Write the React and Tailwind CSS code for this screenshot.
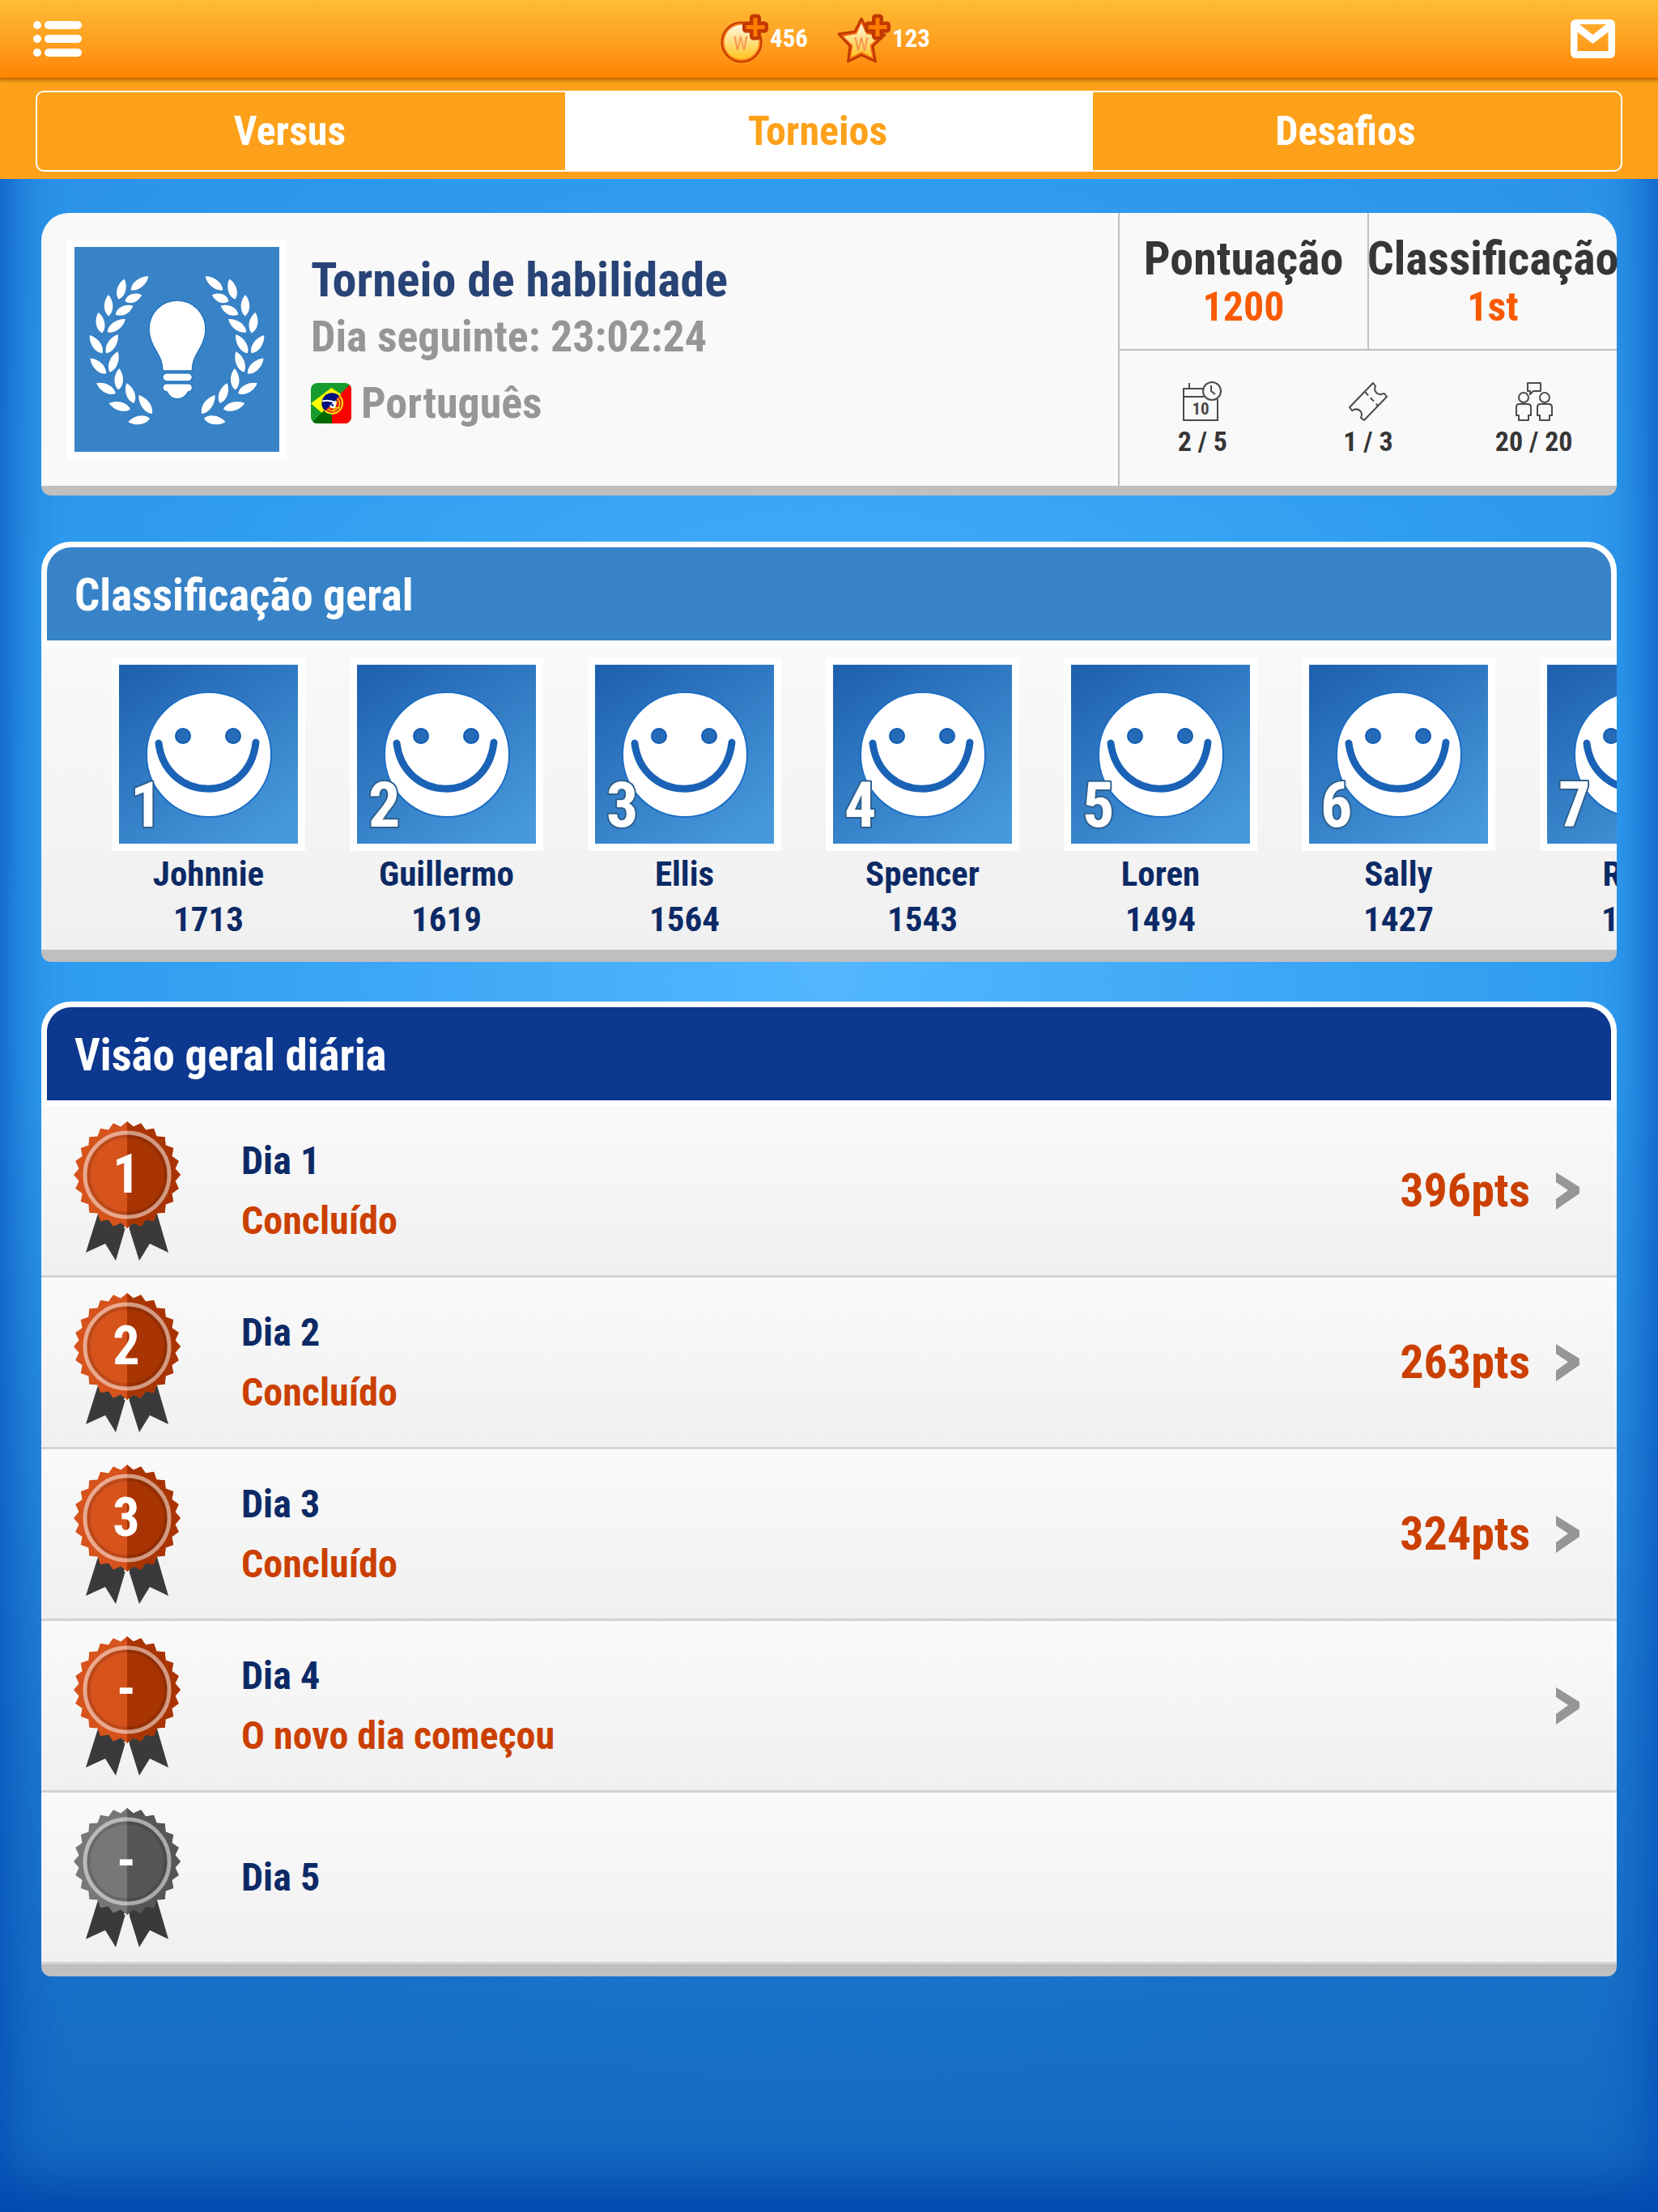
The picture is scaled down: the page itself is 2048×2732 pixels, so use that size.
const players = [
  { name: "Johnnie", score: 1713 },
  { name: "Guillermo", score: 1619 },
  { name: "Ellis", score: 1564 },
  { name: "Spencer", score: 1543 },
  { name: "Loren", score: 1494 },
  { name: "Sally", score: 1427 },
  { name: "Ross", score: 1392 },
];

const days = [
  { label: "Dia 1", status: "Concluído", points: "396pts", badge: "1", open: true },
  { label: "Dia 2", status: "Concluído", points: "263pts", badge: "2", open: true },
  { label: "Dia 3", status: "Concluído", points: "324pts", badge: "3", open: true },
  { label: "Dia 4", status: "O novo dia começou", points: "", badge: "-", open: true },
  { label: "Dia 5", status: "", points: "", badge: "-", open: false },
];

// [tipX, tipY, baseX, baseY] of every leaf in the left half of the wreath
const leaves = [
  [273, 108, 208, 159],
  [184, 118, 163, 193],
  [248, 177, 186, 200],
  [125, 176, 126, 255],
  [216, 217, 151, 249],
  [88, 241, 102, 318],
  [188, 266, 121, 314],
  [160, 322, 117, 392],
  [56, 325, 103, 392],
  [160, 385, 130, 462],
  [58, 410, 117, 467],
  [165, 448, 162, 527],
  [81, 502, 152, 540],
  [192, 502, 219, 576],
  [127, 576, 206, 598],
  [237, 546, 286, 615],
  [198, 645, 278, 632],
];

function leafPath([tx, ty, bx, by]) {
  const dx = bx - tx;
  const dy = by - ty;
  const len = Math.hypot(dx, dy);
  const nx = (-dy / len) * 24;
  const ny = (dx / len) * 24;
  const p = (t, s) => `${tx + dx * t + nx * s} ${ty + dy * t + ny * s}`;
  return `M${tx} ${ty}C${p(0.25, 0.75)} ${p(0.75, 1)} ${bx} ${by}C${p(0.75, -1)} ${p(0.25, -0.75)} ${tx} ${ty}Z`;
}

// 24-tooth rosette edge
const rosette = Array.from({ length: 48 }, (_, i) => {
  const r = i % 2 ? 60 : 66;
  const a = (i * Math.PI) / 24;
  return `${(66 + r * Math.sin(a)).toFixed(1)},${(66 - r * Math.cos(a)).toFixed(1)}`;
}).join(" ");

function ListIcon() {
  return (
    <svg className="w-[60px] h-[46px]" viewBox="0 0 60 46" fill="#fff">
      {[0, 17, 34].map((y) => (
        <g key={y}>
          <rect x="0" y={y + 1} width="10" height="10" rx="5" />
          <rect x="14" y={y + 1} width="46" height="10" rx="5" />
        </g>
      ))}
    </svg>
  );
}

function MailIcon() {
  return (
    <svg className="w-[55px] h-[48px]" viewBox="0 0 55 48">
      <path
        fill="#fff"
        fillRule="evenodd"
        d="M7 0H48Q55 0 55 7V41Q55 48 48 48H7Q0 48 0 41V7Q0 0 7 0ZM11 6L27.500 19L44 6ZM8.500 15.500V39H46.500V15.500L27.500 30Z"
      />
    </svg>
  );
}

function PlusMark() {
  return (
    <path
      d="M43.500 5h5v9h9v5h-9v9h-5v-9h-9v-5h9z"
      fill="#ff7d00"
      stroke="#c23a00"
      strokeWidth="9"
      strokeLinejoin="round"
      paintOrder="stroke"
    />
  );
}

function CoinIcon() {
  return (
    <svg className="w-[62px] h-[62px]" viewBox="0 0 62 62">
      <defs>
        <linearGradient id="coin" x1="0" y1="0" x2="0" y2="1">
          <stop offset="0" stopColor="#fff6e0" />
          <stop offset="1" stopColor="#ffc41e" />
        </linearGradient>
      </defs>
      <circle cx="29" cy="35" r="24.500" fill="#f9730f" stroke="#c23a00" strokeWidth="2" />
      <circle cx="29" cy="35" r="21.500" fill="url(#coin)" />
      <text x="28" y="45" textAnchor="middle" fontSize="24" fontWeight="400" fill="#f79450">W</text>
      <PlusMark />
    </svg>
  );
}

function StarIcon() {
  return (
    <svg className="w-[66px] h-[62px]" viewBox="-4 0 66 62">
      <path
        d="M26 6L34 22L55 26L40 40L43.500 59L26 51L9.500 59L12 40L-2 25L18 22Z"
        fill="#f96a10"
        stroke="#c23a00"
        strokeWidth="3"
        strokeLinejoin="round"
      />
      <path d="M26 12L32 25L48 28L36.500 39L39.500 54L26 47L13 54L15.500 39L4 28L20 25Z" fill="url(#coin)" />
      <text x="26" y="46" textAnchor="middle" fontSize="24" fontWeight="400" fill="#f79450">W</text>
      <PlusMark />
    </svg>
  );
}

function WreathIcon() {
  const d = leaves.map(leafPath).join("");
  return (
    <svg className="block w-full" viewBox="0 0 755 755" fill="#fff">
      <rect width="755" height="755" fill="#3883c7" />
      <g stroke="#2f78bd" strokeWidth="3" paintOrder="stroke">
        <path d={d} />
        <path d={d} transform="matrix(-1 0 0 1 755 0)" />
      </g>
      <g stroke="#1d6fbd" strokeWidth="7" paintOrder="stroke">
        <path d="M327 454C327 392 277 370 277 301A102 102 0 0 1 481 301C481 370 432 392 432 454Z" />
        <rect x="327" y="467" width="105" height="26" rx="13" />
        <path d="M340 506H419Q432 506 432 519Q432 530 418 532Q404 558 379 558Q354 558 342 532Q327 530 327 519Q327 506 340 506Z" />
      </g>
    </svg>
  );
}

function FlagIcon() {
  return (
    <svg className="w-[50px] h-[50px] rounded-lg" viewBox="0 0 150 150">
      <rect width="150" height="150" fill="#169b2f" />
      <path d="M150 0V150H78V72Z" fill="#f00" />
      <path d="M0 150L78 72V150Z" fill="#006a00" />
      <path d="M0 76L76 18L112 42L40 110Z" fill="#ff0" />
      <circle cx="78" cy="75" r="38" fill="#00107e" />
      <path d="M42 68Q75 58 106 84" fill="none" stroke="#fff" strokeWidth="6" />
      <path d="M106 48A38 38 0 0 1 52 102L68 88A20 20 0 0 0 94 60Z" fill="#e81c10" />
      <path d="M106 48A38 38 0 0 1 52 102" fill="none" stroke="#f5e20a" strokeWidth="6" />
      <path d="M98 56A26 26 0 0 1 62 96M84 108L96 66M108 92L70 92" fill="none" stroke="#f5e20a" strokeWidth="4" />
      <path d="M92 64V84Q90 94 80 94Q70 92 70 84Z" fill="#fff" />
      <path d="M76 78h8v8h-8z" fill="#1a2fa0" />
    </svg>
  );
}

function CalendarIcon() {
  return (
    <svg className="w-[50px] h-[50px]" viewBox="0 0 50 50" fill="none" stroke="#4a4a4a" strokeWidth="2">
      <path d="M27 9H2V48H44V22M2 19H27M9 2V9" />
      <circle cx="37" cy="12" r="11" />
      <path d="M36 5V12L41 16" />
      <text x="23" y="41" textAnchor="middle" fontSize="21" fontWeight="700" fill="#4a4a4a" stroke="none">10</text>
    </svg>
  );
}

function TicketIcon() {
  return (
    <svg className="w-[50px] h-[50px]" viewBox="0 0 50 50" fill="none" stroke="#4a4a4a" strokeWidth="2" strokeLinejoin="round">
      <path d="M31 2L34 6C32 10 34 15 39 16C42 16 43 15 45 15L48 19L20 48L16 45C18 41 17 37 13 35C9 33 6 36 5 36L2 32Z" />
      <path d="M21 13L37 30" strokeDasharray="6 4" />
    </svg>
  );
}

function PeopleIcon() {
  return (
    <svg className="w-[50px] h-[50px]" viewBox="0 0 50 50" fill="none" stroke="#4a4a4a" strokeWidth="2" strokeLinejoin="round">
      <path d="M17 2H33V12H24L20 16V12H17Z" />
      <circle cx="12" cy="20" r="6" />
      <circle cx="38" cy="20" r="6" />
      {[0, 26].map((x) => (
        <path key={x} transform={`translate(${x} 0)`} d="M7 28H17Q21 28 21 32V42H18V48H6V42H3V32Q3 28 7 28Z" />
      ))}
    </svg>
  );
}

function Avatar({ rank }) {
  return (
    <svg className="block w-full" viewBox="0 0 221 221">
      <defs>
        <linearGradient id="avatar" x1="0.1" y1="0" x2="0.8" y2="1">
          <stop offset="0" stopColor="#1f61af" />
          <stop offset="1" stopColor="#4799dc" />
        </linearGradient>
      </defs>
      <rect width="221" height="221" fill="url(#avatar)" />
      <circle cx="111" cy="111" r="77" fill="#fff" stroke="#1b6cc4" strokeWidth="2" />
      <g fill="#266bb8" stroke="#0f5cb4" strokeWidth="2">
        <circle cx="79" cy="88" r="9" />
        <circle cx="141" cy="88" r="9" />
      </g>
      <path d="M49 97C58 170 160 174 169 96" fill="none" stroke="#1a62b5" strokeWidth="9" strokeLinecap="round" />
      <text
        x="14"
        y="200"
        fontSize="78"
        fontWeight="700"
        fill="#fff"
        stroke="#2d5f8e"
        strokeWidth="4"
        strokeLinejoin="round"
        paintOrder="stroke"
      >
        {rank}
      </text>
    </svg>
  );
}

function Medal({ label, open }) {
  const light = open ? "#d6531c" : "#777";
  const dark = open ? "#a93403" : "#565656";
  return (
    <svg className="w-[132px] h-[172px] shrink-0" viewBox="0 0 132 172">
      <path fill="#3a3a3a" d="M30 114L15 162L39 151L52 172L66 124L81 172L94 151L117 162L103 114Z" />
      <path className="fill-[#f5f5f5]" d="M62 132H69L66 120Z" />
      <clipPath id="right-half">
        <rect x="66" y="0" width="66" height="172" />
      </clipPath>
      <polygon points={rosette} fill={light} />
      <polygon points={rosette} fill={dark} clipPath="url(#right-half)" />
      <circle cx="66" cy="66" r="48" fill="none" stroke="#000" strokeOpacity="0.12" strokeWidth="5" />
      <circle cx="66" cy="66" r="52" fill="none" stroke="#fff" strokeOpacity="0.5" strokeWidth="5" />
      <text x="65" y="88" textAnchor="middle" fontSize="66" fontWeight="700" fill="#fff">
        {label}
      </text>
    </svg>
  );
}

function Stat({ label, value }) {
  return (
    <div className="flex-1 min-w-0 flex flex-col items-center justify-center pt-1 leading-[60px] whitespace-nowrap">
      <span className="text-[58px] text-[#363636]">{label}</span>
      <span className="text-[50px] text-[#f95a00]">{value}</span>
    </div>
  );
}

function Counter({ icon, value }) {
  return (
    <div className="flex-1 flex flex-col items-center justify-center gap-1.5">
      {icon}
      <span className="text-[34px] leading-9 text-[#363636]">{value}</span>
    </div>
  );
}

function PanelHeader({ title, className }) {
  return (
    <div className="bg-white p-[7px] rounded-t-[36px]">
      <h2 className={`h-[115px] flex items-center pl-[34px] pt-1 rounded-t-[30px] text-[55px] text-white ${className}`}>
        {title}
      </h2>
    </div>
  );
}

function Tab({ label, active }) {
  return (
    <button
      type="button"
      className={`flex-1 pr-7 text-[50px] ${active ? "bg-white text-[#fea11a]" : "text-white"}`}
    >
      {label}
    </button>
  );
}

export default function App() {
  return (
    <div className="min-h-screen font-['Roboto_Condensed','Open_Sans_Condensed','Liberation_Sans',sans-serif] font-bold shadow-[inset_0_0_70px_rgba(0,75,185,0.8),inset_0_-50px_70px_-20px_rgba(0,62,160,0.8)] bg-[linear-gradient(to_bottom,rgba(0,70,160,0)_48%,rgba(0,70,160,0.55)),radial-gradient(circle_1400px_at_50%_44%,#52b7ff_0,#2f9df0_900px,#2a92e8)]">
      {/* Top bar */}
      <header className="relative h-[98px] grid grid-cols-[1fr_auto_1fr] items-center pl-[41px] pr-[53px] bg-linear-to-b from-[#ffbc35] to-[#ff8500] border-b-2 border-[#cf6d00] shadow-[0_1px_4px_rgba(140,90,0,0.8)]">
        <button type="button" aria-label="Menu" className="justify-self-start">
          <ListIcon />
        </button>
        <div className="flex items-center gap-9 text-[31px] text-white">
          <div className="flex items-center gap-0.5">
            <CoinIcon />
            <span>456</span>
          </div>
          <div className="flex items-center gap-0.5">
            <StarIcon />
            <span>123</span>
          </div>
        </div>
        <button type="button" aria-label="Mensagens" className="justify-self-end">
          <MailIcon />
        </button>
      </header>

      {/* Tabs */}
      <nav className="bg-[#fea11a] px-11 pt-3.5 pb-[9px]">
        <div className="h-[100px] flex border-2 border-white rounded-[10px] overflow-hidden">
          <Tab label="Versus" />
          <Tab label="Torneios" active />
          <Tab label="Desafios" />
        </div>
      </nav>

      <main className="px-[51px] pt-[42px] pb-20">
        {/* Tournament summary */}
        <section className="flex bg-[#f9f9f9] rounded-t-[34px] rounded-b-xl border-b-12 border-[#bfbfbf]">
          <div className="flex-1 flex items-start gap-[30px] pl-8 pt-[33px] pb-[33px]">
            <div className="w-[271px] bg-white p-[9px]">
              <WreathIcon />
            </div>
            <div className="pt-[15px] text-[54px] leading-[70px] text-[#969696]">
              <h1 className="text-[60px] text-[#284375]">Torneio de habilidade</h1>
              <p>Dia seguinte: 23:02:24</p>
              <p className="mt-3 flex items-center gap-3">
                <FlagIcon />
                Português
              </p>
            </div>
          </div>
          <div className="w-[616px] flex flex-col border-l-2 border-[#bfbfbf]">
            <div className="h-[170px] flex border-b-2 border-[#bfbfbf] divide-x-2 divide-[#bfbfbf]">
              <Stat label="Pontuação" value="1200" />
              <Stat label="Classificação" value="1st" />
            </div>
            <div className="flex-1 flex">
              <Counter icon={<CalendarIcon />} value="2 / 5" />
              <Counter icon={<TicketIcon />} value="1 / 3" />
              <Counter icon={<PeopleIcon />} value="20 / 20" />
            </div>
          </div>
        </section>

        {/* General ranking */}
        <section className="mt-[57px]">
          <PanelHeader title="Classificação geral" className="bg-[#3883c7]" />
          <ul className="flex gap-[55px] overflow-hidden pl-[87px] pt-3.5 pb-2.5 bg-linear-to-b from-[#f9f9f9] to-[#f0f0f0] border-b-15 border-[#bfbfbf] rounded-b-xl">
            {players.map((p, i) => (
              <li key={p.name} className="w-[239px] shrink-0 text-center text-[43px] leading-14 text-[#0c2a66]">
                <div className="bg-white p-[9px]">
                  <Avatar rank={i + 1} />
                </div>
                <p>{p.name}</p>
                <p>{p.score}</p>
              </li>
            ))}
          </ul>
        </section>

        {/* Daily overview */}
        <section className="mt-[49px]">
          <PanelHeader title="Visão geral diária" className="bg-[#0d388f]" />
          <ul className="border-b-15 border-[#bfbfbf] rounded-b-xl overflow-hidden">
            {days.map((day) => (
              <li key={day.label} className="border-b-3 border-[#d4d4d4]">
                <button
                  type="button"
                  disabled={!day.open}
                  className="w-full h-[209px] flex items-center pl-[40px] pr-[46px] text-left bg-linear-to-b from-[#fafafa] to-[#f0f0f0]"
                >
                  <Medal label={day.badge} open={day.open} />
                  <span className="flex-1 flex flex-col pl-[75px] text-[48px] leading-[74px]">
                    <span className="text-[#0c2a66]">{day.label}</span>
                    {day.status && <span className="text-[#cb4000]">{day.status}</span>}
                  </span>
                  <span className="text-[58px] text-[#cb4000]">{day.points}</span>
                  {day.open && (
                    <svg className="ml-8 w-[29px] h-[46px]" viewBox="0 0 29 46" fill="#969696">
                      <path d="M0 0L29 18V26L0 46V33L15 22L0 12Z" />
                    </svg>
                  )}
                </button>
              </li>
            ))}
          </ul>
        </section>
      </main>
    </div>
  );
}
